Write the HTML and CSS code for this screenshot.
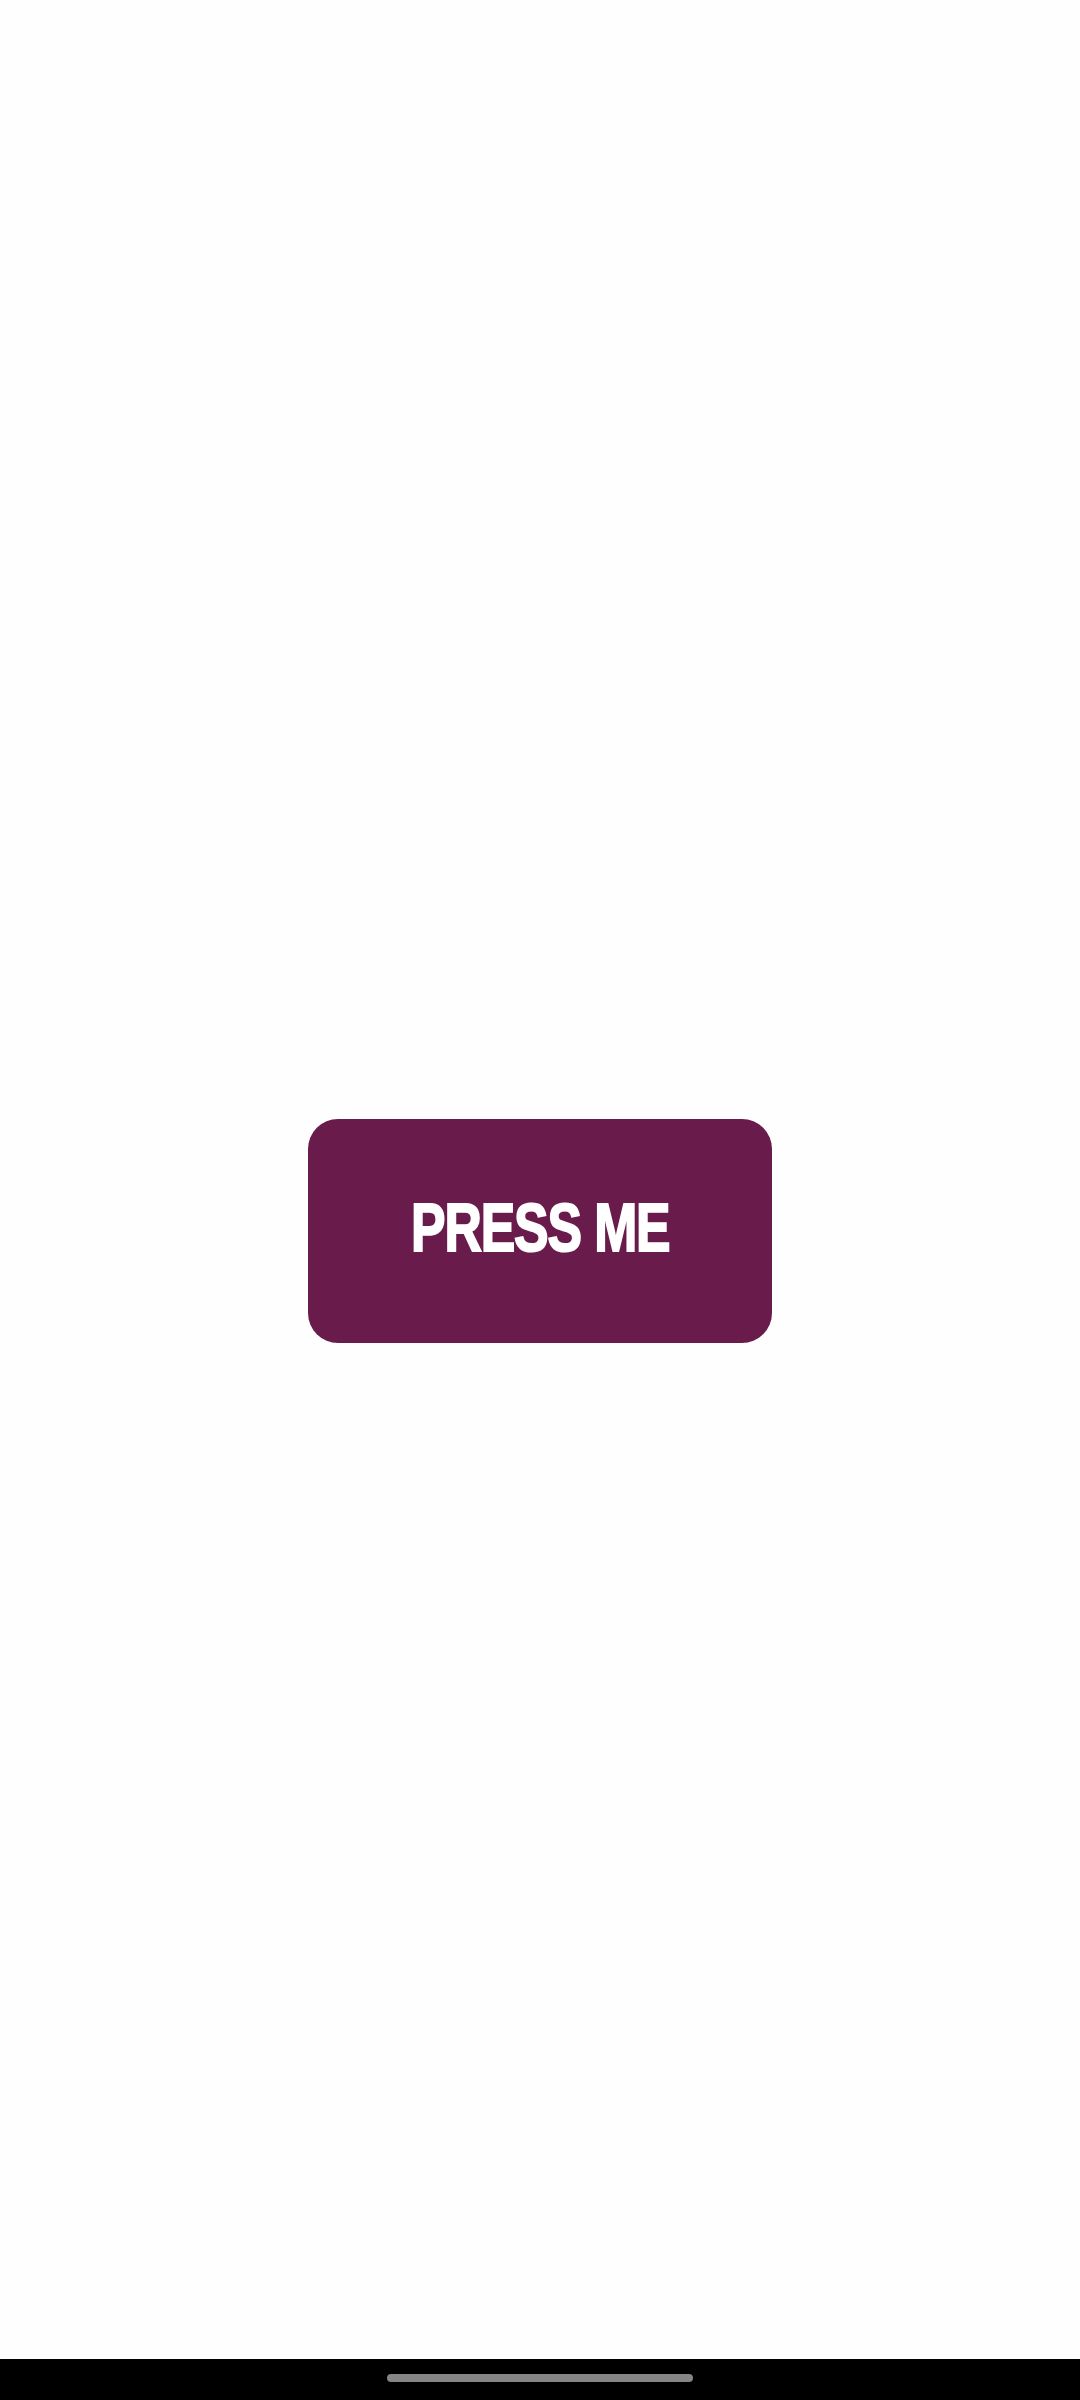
FILE: index.html
```html
<!DOCTYPE html>
<html>
<head>
<meta charset="utf-8">
<link rel="stylesheet" href="styles.css">
</head>
<body>
<div class="screen">
  <main class="content">
    <button class="press"><span class="label">PRESS ME</span></button>
  </main>
  <div class="navbar"><div class="handle"></div></div>
</div>
</body>
</html>
```
FILE: styles.css
```css
html, body {
  margin: 0;
  padding: 0;
  background: #fefefe;
}
.screen {
  width: 1080px;
  height: 2400px;
  display: flex;
  flex-direction: column;
}
.content {
  flex: 1;
  display: flex;
  align-items: center;
  justify-content: center;
  padding-top: 103px;
}
.press {
  width: 464px;
  height: 224px;
  border: none;
  border-radius: 30px;
  background: #691c4b;
  color: #ffffff;
  padding: 0 0 8px 0;
  display: flex;
  align-items: center;
  justify-content: center;
}
.label {
  display: inline-block;
  font-family: "Liberation Sans", Arial, sans-serif;
  font-weight: bold;
  font-size: 69px;
  line-height: 1;
  letter-spacing: -1.5px;
  transform: scaleX(0.75);
  -webkit-text-stroke: 2px #ffffff;
  white-space: nowrap;
}
.navbar {
  height: 41px;
  background: #000;
  display: flex;
  justify-content: center;
  padding-top: 15px;
  box-sizing: border-box;
}
.handle {
  width: 306px;
  height: 8px;
  border-radius: 4px;
  background: #868686;
}
```
